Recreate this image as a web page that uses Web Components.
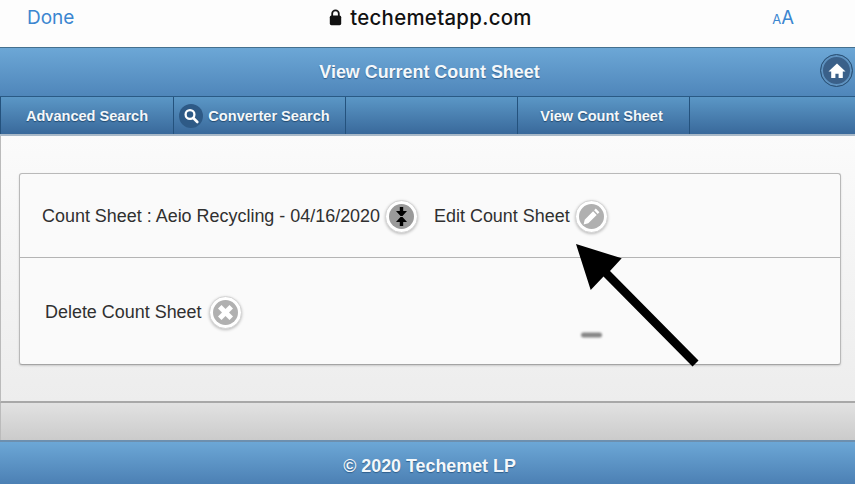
<!DOCTYPE html>
<html lang="en"><head><meta charset="utf-8"><title>View Current Count Sheet</title>
<style>html,body{margin:0;padding:0;background:#fff}body{width:855px;height:484px;overflow:hidden;font-family:"Liberation Sans",sans-serif}</style>
</head><body>
<template id="t-browser"><style>
:host{display:grid;grid-template-columns:1fr auto 1fr;align-items:center;height:47px;box-sizing:border-box;padding:0 0 15px 27px;background:#fdfdfd;font-family:Inter,"Liberation Sans",sans-serif}
.done{color:#3b86d0;font-size:19px;line-height:32px;padding-top:2px}
.url{display:flex;align-items:center;gap:8px;color:#111;font-size:20.4px;font-weight:500;letter-spacing:.3px;margin-left:-21px}
.aa{justify-self:end;margin-right:61px;color:#3b86d0;font-size:18.500px}.aa small{font-size:13px}
svg{display:block}
</style><span class="done">Done</span>
<span class="url"><svg width="13" height="17" viewBox="0 0 13 17"><path d="M3.200 7V4.600a3.300 3.300 0 0 1 6.600 0V7" fill="none" stroke="#111" stroke-width="1.800"/><rect x=".8" y="6.600" width="11.400" height="9.600" rx="1.600" fill="#111"/></svg><span>techemetapp.com</span></span>
<span class="aa"><small>A</small>A</span></template>

<template id="t-header"><style>
:host{display:flex;align-items:center;justify-content:center;position:relative;height:49px;box-sizing:border-box;padding-left:4px;border-top:1px solid #44708f;background:linear-gradient(#6ca7d6,#4f86ba);color:#f4f8fb;font-size:17.900px;font-weight:bold;text-shadow:0 1px 1px #2f5f8c}
::slotted([slot=action]){position:absolute;right:2px;top:6px}
</style><slot></slot><slot name="action"></slot></template>

<template id="t-home"><style>
:host{display:block;width:33px;height:33px;box-sizing:border-box;border-radius:50%;background:#3a6089;border:1px solid #2a5175;box-shadow:inset 0 0 0 2px #5e92c0}
svg{display:block;margin:4.500px}
</style><svg width="22" height="22" viewBox="0 0 22 22"><path d="M11 3.500 2.500 11.500h2.700V18h4.200v-4.200h3.200V18h4.200v-6.500h2.700z" fill="#fff"/></svg></template>

<template id="t-nav"><style>
:host{display:grid;grid-template-columns:173px 172px 172px 172px 1fr;height:40px;box-sizing:border-box;border-top:1px solid #2a5a85;border-bottom:2px solid #a9b9c8;background:linear-gradient(#5b97c6,#39699b)}
</style><slot></slot></template>

<template id="t-navcell"><style>
:host{display:flex;align-items:center;justify-content:center;gap:5px;box-sizing:border-box;border-left:1px solid #24527d;color:#f4f8fb;font-size:14.550px;font-weight:bold;text-shadow:0 1px 1px #23496e}
:host([pad]){padding-right:10px}
:host([pad4]){padding-right:4px}
</style><slot></slot></template>

<template id="t-search"><style>
:host{display:block;width:24px;height:24px;border-radius:50%;background:#2e5a86}
svg{display:block;margin:3px}
</style><svg width="18" height="18" viewBox="0 0 18 18"><circle cx="8" cy="7.500" r="4.400" fill="none" stroke="#fff" stroke-width="2.300"/><path d="m11.300 11 4 4" stroke="#fff" stroke-width="2.600" stroke-linecap="round"/></svg></template>

<template id="t-main"><style>
:host{display:block;height:267px;box-sizing:border-box;padding:37px 14px 0 19px;border-left:1px solid #bbb;background:linear-gradient(#fbfbfb,#ededed);border-bottom:2px solid #a8a8a8}
</style><slot></slot></template>

<template id="t-card"><style>
:host{display:block;position:relative;height:192px;width:822px;box-sizing:border-box;margin-left:-1px;border:1px solid #b9b9b9;border-bottom-color:#a4a4a4;border-radius:3px;background:#fafafa;box-shadow:0 1px 2px rgba(0,0,0,.15);color:#303030;font-size:17.950px}
</style><slot></slot></template>

<template id="t-row"><style>
:host{display:flex;align-items:center;box-sizing:border-box;height:84px;padding:2px 0 0 22px;border-bottom:1px solid #b4b4b4}
:host([second]){height:106px;padding:38px 0 0 25px;border-bottom:0;align-items:flex-start}
</style><slot></slot></template>

<template id="t-action"><style>
:host{display:inline-flex;align-items:center;gap:5px;white-space:nowrap}
:host([gap]){margin-left:16px}
:host([wide]){gap:7px}
.o{display:block;width:33px;height:33px;box-sizing:border-box;border-radius:50%;background:#fff;border:1px solid #d4d4d4;box-shadow:0 1px 3px rgba(0,0,0,.25);padding:3px}
.i{display:block;width:25px;height:25px;border-radius:50%;background:var(--disc,#b0b0b0)}
svg{display:block}
</style><slot></slot><span class="o"><span class="i"><slot name="icon"></slot></span></span></template>

<template id="t-footer"><style>
:host{display:flex;align-items:center;justify-content:center;height:44px;box-sizing:border-box;padding:7px 0 0 4px;border-top:2px solid #6d8fae;background:linear-gradient(#6ca7d6,#4c80b4);color:#f4f8fb;font-size:17.860px;font-weight:bold;text-shadow:0 1px 1px #2f5f8c}
</style><slot></slot></template>

<script>
for (const [name, id] of [['x-browser','t-browser'],['x-header','t-header'],['x-home','t-home'],['x-nav','t-nav'],['x-navcell','t-navcell'],['x-search','t-search'],['x-main','t-main'],['x-card','t-card'],['x-row','t-row'],['x-action','t-action'],['x-footer','t-footer']]) {
  customElements.define(name, class extends HTMLElement {
    constructor(){super();this.attachShadow({mode:'open'}).appendChild(document.getElementById(id).content.cloneNode(true));}
  });
}
customElements.define('x-band', class extends HTMLElement {
  constructor(){super();this.attachShadow({mode:'open'}).innerHTML='<style>:host{display:block;height:37px;border-left:1px solid #bbb;background:linear-gradient(#e2e2e2,#cbcbcb)}</style>';}
});
customElements.define('x-arrow', class extends HTMLElement {
  constructor(){super();this.attachShadow({mode:'open'}).innerHTML='<style>:host{position:absolute;left:0;top:0;width:855px;height:484px;pointer-events:none}svg{display:block}.s{filter:blur(.8px)}</style><svg width="855" height="484" viewBox="0 0 855 484"><path d="M576 244 621.700 258.300 610 271 698.500 360.500 692.500 366.500 603.500 276.500 590.700 290z" fill="#000"/><rect class="s" x="581" y="332.500" width="21" height="5" rx="2.500" fill="#858585"/></svg>';}
});
</script>

<x-browser></x-browser>
<x-header>View Current Count Sheet<x-home slot="action"></x-home></x-header>
<x-nav>
  <x-navcell>Advanced Search</x-navcell>
  <x-navcell pad><x-search></x-search>Converter Search</x-navcell>
  <x-navcell></x-navcell>
  <x-navcell pad4>View Count Sheet</x-navcell>
  <x-navcell></x-navcell>
</x-nav>
<x-main>
  <x-card>
    <x-row>
      <x-action style="--disc:#9a9a9a">Count Sheet : Aeio Recycling - 04/16/2020
        <svg slot="icon" width="25" height="25" viewBox="0 0 25 25"><path d="M10.800 3h3.400v4H18l-4.500 5h-2L7 7h3.800zM10.800 22h3.400v-4H18l-4.500-5h-2L7 18h3.800z" fill="#000"/></svg></x-action>
      <x-action gap>Edit Count Sheet
        <svg slot="icon" width="25" height="25" viewBox="0 0 25 25"><path d="M16.800 4.600l3.600 3.600-1.700 1.700-3.600-3.600zM14.100 7.300l3.600 3.600-8.400 8.400-4.700 1.100 1.100-4.700z" fill="#fff"/></svg></x-action>
    </x-row>
    <x-row second>
      <x-action wide>Delete Count Sheet
        <svg slot="icon" width="25" height="25" viewBox="0 0 25 25"><path d="M5 8.500 8.500 5l4 4 4-4L20 8.500l-4 4 4 4-3.500 3.500-4-4-4 4L5 16.500l4-4z" fill="#fff"/></svg></x-action>
    </x-row>
  </x-card>
</x-main>
<x-band></x-band>
<x-footer>© 2020 Techemet LP</x-footer>
<x-arrow></x-arrow>
</body></html>
